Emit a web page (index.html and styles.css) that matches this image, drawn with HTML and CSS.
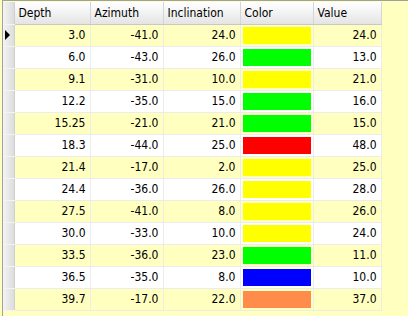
FILE: index.html
```html
<!DOCTYPE html>
<html lang="en">
<head>
    <meta charset="UTF-8">
    <title>Well Survey Grid</title>
    <link rel="stylesheet" href="styles.css">
</head>
<body>
<div class="grid">
    <table id="survey">
        <colgroup>
            <col class="c-ind"><col class="c-depth"><col class="c-az"><col class="c-inc"><col class="c-color"><col class="c-value">
        </colgroup>
        <thead>
            <tr>
                <th class="ind"></th>
                <th>Depth</th>
                <th>Azimuth</th>
                <th>Inclination</th>
                <th>Color</th>
                <th>Value</th>
            </tr>
        </thead>
        <tbody id="rows"></tbody>
    </table>
</div>

<script>
    const data = [
        ['3.0', '-41.0', '24.0', '#ffff00', '24.0'],
        ['6.0', '-43.0', '26.0', '#00ff00', '13.0'],
        ['9.1', '-31.0', '10.0', '#ffff00', '21.0'],
        ['12.2', '-35.0', '15.0', '#00ff00', '16.0'],
        ['15.25', '-21.0', '21.0', '#00ff00', '15.0'],
        ['18.3', '-44.0', '25.0', '#ff0000', '48.0'],
        ['21.4', '-17.0', '2.0', '#ffff00', '25.0'],
        ['24.4', '-36.0', '26.0', '#ffff00', '28.0'],
        ['27.5', '-41.0', '8.0', '#ffff00', '26.0'],
        ['30.0', '-33.0', '10.0', '#ffff00', '24.0'],
        ['33.5', '-36.0', '23.0', '#00ff00', '11.0'],
        ['36.5', '-35.0', '8.0', '#0000ff', '10.0'],
        ['39.7', '-17.0', '22.0', '#ff8c4a', '37.0']
    ];

    // Build the grid rows
    const tbody = document.getElementById('rows');
    data.forEach((r, i) => {
        const tr = document.createElement('tr');
        tr.className = i % 2 === 0 ? 'odd' : 'even';
        tr.innerHTML = `
            <td class="ind">${i === 0 ? '<span class="arrow"></span>' : ''}</td>
            <td class="num">${r[0]}</td>
            <td class="num">${r[1]}</td>
            <td class="num">${r[2]}</td>
            <td class="swatch"><div style="background:${r[3]}"></div></td>
            <td class="num">${r[4]}</td>
        `;
        tbody.appendChild(tr);
    });
</script>
</body>
</html>
```

FILE: styles.css
```css
body {
    margin: 0;
    background: #ffffc0;
    font-family: "DejaVu Sans Condensed", "DejaVu Sans", sans-serif;
    font-size: 12px;
    line-height: 14px;
    color: #000;
    overflow: hidden;
}
.grid {
    margin-left: 2px;
    padding-top: 1px;
    border-left: 1px solid #a0a0a0;
    border-top: 1px solid #a0a0a0;
    height: 314px;
}
#survey {
    border-collapse: collapse;
    table-layout: fixed;
    width: 378px;
}
.c-ind { width: 11px; }
.c-depth { width: 76px; }
.c-az { width: 73px; }
.c-inc { width: 77px; }
.c-color { width: 73px; }
.c-value { width: 68px; }
thead tr { height: 22px; }
tbody tr { height: 22px; }
th {
    padding: 0 4px;
    text-align: left;
    font-weight: normal;
    background: linear-gradient(#ffffff, #f2f2f2 50%, #e4e4e4);
    border-right: 1px solid #d5d5d5;
    border-bottom: 1px solid #c8c8c8;
}
td {
    padding: 0 4px;
    border: 1px solid #ececec;
}
tr.odd td { background: #ffffc0; }
tr.even td { background: #ffffff; }
td.num { text-align: right; }
tr td.ind, th.ind {
    padding: 0;
    background: linear-gradient(90deg, #f4f4f4, #dcdcdc);
    border: none;
    border-right: 1px solid #d0d0d0;
    border-bottom: 1px solid #f4f4f4;
}
.arrow {
    display: block;
    width: 0;
    height: 0;
    margin-left: 2px;
    border-top: 5px solid transparent;
    border-bottom: 5px solid transparent;
    border-left: 5px solid #000;
}
td.swatch {
    padding: 2px;
}
td.swatch div {
    height: 17px;
}
```
